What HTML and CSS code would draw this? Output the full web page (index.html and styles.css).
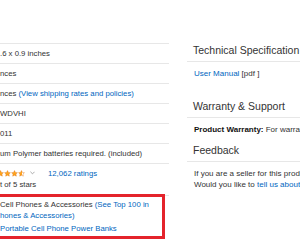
FILE: index.html
```html
<!DOCTYPE html>
<html>
<head>
<meta charset="utf-8">
<link rel="stylesheet" href="styles.css">
</head>
<body>
<div class="page">
  <div class="details">
    <div class="row">.6 x 0.9 inches</div>
    <div class="row">nces</div>
    <div class="row">nces <a class="link" href="#">(View shipping rates and policies)</a></div>
    <div class="row">WDVHI</div>
    <div class="row">011</div>
    <div class="row">um Polymer batteries required. (included)</div>
    <div class="row rating">
      <div class="stars-line">
        <span class="stars">
          <svg class="star" viewBox="0 0 24 24"><path d="M12 2l3.09 6.26L22 9.27l-5 4.87 1.18 6.88L12 17.77l-6.18 3.25L7 14.14 2 9.27l6.91-1.01L12 2z"/></svg>
          <svg class="star" viewBox="0 0 24 24"><path d="M12 2l3.09 6.26L22 9.27l-5 4.87 1.18 6.88L12 17.77l-6.18 3.25L7 14.14 2 9.27l6.91-1.01L12 2z"/></svg>
          <svg class="star" viewBox="0 0 24 24"><path d="M12 2l3.09 6.26L22 9.27l-5 4.87 1.18 6.88L12 17.77l-6.18 3.25L7 14.14 2 9.27l6.91-1.01L12 2z"/></svg>
          <svg class="star half" viewBox="0 0 24 24"><defs><linearGradient id="hf" x1="0" x2="1" y1="0" y2="0"><stop offset="50%" stop-color="#ffa41c"/><stop offset="50%" stop-color="#ffffff"/></linearGradient></defs><path fill="url(#hf)" d="M12 2l3.09 6.26L22 9.27l-5 4.87 1.18 6.88L12 17.77l-6.18 3.25L7 14.14 2 9.27l6.91-1.01L12 2z"/></svg>
        </span>
        <svg class="chev" viewBox="0 0 6 4"><path d="M0.5 0.5L3 3L5.5 0.5"/></svg>
        <a class="link ratings" href="#">12,062 ratings</a>
      </div>
      <div>t of 5 stars</div>
    </div>
    <div class="row rank">
      <div> Cell Phones &amp; Accessories <a class="link" href="#">(See Top 100 in<br>hones &amp; Accessories)</a></div>
      <div class="sub"><a class="link" href="#">Portable Cell Phone Power Banks</a></div>
      <div class="highlight"></div>
    </div>
  </div>
  <div class="side">
    <h2 class="heading">Technical Specification</h2>
    <div class="item first"><a class="link" href="#">User Manual</a> [pdf ]</div>
    <h2 class="heading warranty">Warranty &amp; Support</h2>
    <div class="item"><b>Product Warranty:</b> For warranty information about this product</div>
    <h2 class="heading feedback">Feedback</h2>
    <div class="item">If you are a seller for this product,<br>Would you like to <a class="link" href="#">tell us about a lower price</a>?</div>
  </div>
</div>
</body>
</html>
```
FILE: styles.css
```css
html, body {
  margin: 0;
  padding: 0;
  background: #fff;
  overflow: hidden;
}
body {
  width: 300px;
  height: 240px;
  font-family: "Liberation Sans", Arial, sans-serif;
  color: #333;
}
.page {
  display: flex;
  align-items: flex-start;
}
.details {
  width: 169px;
  flex-shrink: 0;
  padding-top: 43px;
  font-size: 7.75px;
  line-height: 11px;
  white-space: nowrap;
}
.row {
  box-sizing: border-box;
  height: 20px;
  border-top: 1px solid #e7e7e7;
  padding-top: 4px;
}
.link {
  color: #0066c0;
  text-decoration: none;
}
.rating {
  height: 32px;
  padding-top: 3px;
}
.stars-line {
  display: flex;
  align-items: center;
  height: 12px;
}
.stars {
  display: flex;
  margin-left: -3px;
}
.star {
  width: 7px;
  height: 7px;
  fill: #ffa41c;
  stroke: #de7921;
  stroke-width: 1.5;
}
.chev {
  width: 5px;
  height: 4px;
  margin-left: 5px;
  fill: none;
  stroke: #999;
  stroke-width: 1;
}
.ratings {
  margin-left: 13px;
}
.rank {
  position: relative;
  height: auto;
  padding-top: 3px;
}
.sub {
  margin-top: 2px;
}
.highlight {
  position: absolute;
  top: -2px;
  left: -5px;
  right: 4px;
  height: 39px;
  border: 3px solid #e4232b;
}
.side {
  margin-left: 18px;
  width: 220px;
  flex-shrink: 0;
  padding-top: 43px;
  white-space: nowrap;
}
.heading {
  margin: 0;
  font-size: 10.5px;
  line-height: 14px;
  font-weight: normal;
  color: #333;
  padding: 0 0 4px 6px;
  border-bottom: 1px solid #e7e7e7;
}
.item {
  font-size: 8px;
  line-height: 11px;
  padding: 6px 0 0 7px;
}
.item b {
  color: #111;
}
.warranty {
  margin-top: 20px;
}
.feedback {
  margin-top: 8px;
}
```
